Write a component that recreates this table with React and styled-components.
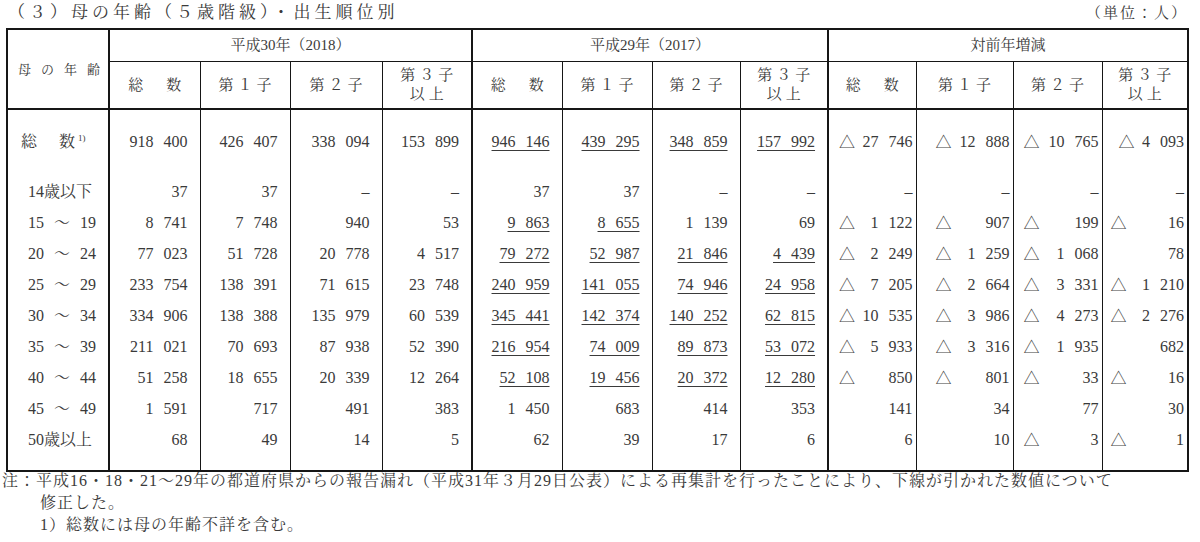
import React from "react"
import styled, { createGlobalStyle } from "styled-components"

const INK = "#3a3a3a"
const LINE = "#161616"

const GlobalStyle = createGlobalStyle`
  html, body {
    margin: 0;
    padding: 0;
    background: #fff;
  }
  body {
    font-family: "Liberation Serif", "Noto Serif CJK JP", "Noto Sans CJK JP", serif;
    color: ${INK};
  }
`

const Page = styled.div`
  width: 1200px;
  height: 542px;
  overflow: hidden;
`

const TitleBar = styled.header`
  display: flex;
  justify-content: space-between;
  align-items: flex-start;
  height: 28px;
  padding: 2px 12px 0 8px;
  box-sizing: border-box;
`

const Title = styled.h1`
  margin: 0;
  font-size: 17px;
  line-height: 22px;
  font-weight: normal;
  letter-spacing: 4px;
  white-space: nowrap;
`

const Unit = styled.span`
  font-size: 15px;
  line-height: 22px;
  letter-spacing: 2px;
`

const Table = styled.table`
  margin-left: 6px;
  width: 1182px;
  table-layout: fixed;
  border-collapse: collapse;
  border: 2px solid ${LINE};
`

const HeadCell = styled.th`
  height: ${p => p.$h}px;
  padding: 0 0 0 ${p => p.$spread ?? 4}px;
  font-size: ${p => p.$size ?? 15}px;
  font-weight: normal;
  line-height: 19px;
  letter-spacing: ${p => p.$spread ?? 4}px;
  text-align: center;
  vertical-align: middle;
  white-space: nowrap;
  border: 1px solid ${LINE};
  border-left-width: ${p => (p.$thick ? 2 : 1)}px;
  border-bottom-width: ${p => (p.$bottom ? 2 : 1)}px;
`

const Cell = styled.td`
  padding: ${p => p.$pt}px ${p => p.$pr ?? 12}px ${p => p.$pb}px ${p => p.$pl ?? 0}px;
  font-size: 16px;
  line-height: 31px;
  word-spacing: 6px;
  text-align: ${p => (p.$left ? "left" : "right")};
  vertical-align: middle;
  white-space: nowrap;
  border-top: none;
  border-bottom: none;
  border-left: ${p => (p.$thick ? 2 : 1)}px solid ${LINE};
`

const Fixed = styled.span`
  text-decoration: underline;
  text-decoration-thickness: 1px;
  text-underline-offset: 3px;
`

const DiffBox = styled.span`
  display: flex;
  justify-content: space-between;
  align-items: center;
`

const Tri = styled.span`
  font-family: "Noto Sans CJK JP", sans-serif;
  font-size: 16px;
  color: #444;
`

const Sup = styled.sup`
  font-size: 9px;
  line-height: 0;
  vertical-align: 6px;
  letter-spacing: 0;
  word-spacing: 0;
`

const TotalLabel = styled.span`
  letter-spacing: 3px;
`

const Notes = styled.section`
  margin-top: -2px;
  padding: 0 0 0 2px;
  font-size: 16px;
  line-height: 22px;
  letter-spacing: 1px;
  white-space: nowrap;
`

const NoteLine = styled.div`
  padding-left: ${p => (p.$indent ? 38 : 0)}px;
`

const widths = [102, 91, 90, 92, 90, 90, 90, 88, 88, 88, 97, 89, 86]
const diffPad = [10, 19, 10, 8]

const rows = [
  {
    label: <TotalLabel>総　数<Sup>1)</Sup></TotalLabel>,
    total: true,
    y18: ["918 400", "426 407", "338 094", "153 899"],
    y17: ["_946 146", "_439 295", "_348 859", "_157 992"],
    diff: ["△27 746", "△12 888", "△10 765", "△4 093"],
  },
  {
    label: "14歳以下",
    y18: ["37", "37", "–", "–"],
    y17: ["37", "37", "–", "–"],
    diff: ["–", "–", "–", "–"],
  },
  {
    label: "15 ～ 19",
    y18: ["8 741", "7 748", "940", "53"],
    y17: ["_9 863", "_8 655", "1 139", "69"],
    diff: ["△1 122", "△907", "△199", "△16"],
  },
  {
    label: "20 ～ 24",
    y18: ["77 023", "51 728", "20 778", "4 517"],
    y17: ["_79 272", "_52 987", "_21 846", "_4 439"],
    diff: ["△2 249", "△1 259", "△1 068", "78"],
  },
  {
    label: "25 ～ 29",
    y18: ["233 754", "138 391", "71 615", "23 748"],
    y17: ["_240 959", "_141 055", "_74 946", "_24 958"],
    diff: ["△7 205", "△2 664", "△3 331", "△1 210"],
  },
  {
    label: "30 ～ 34",
    y18: ["334 906", "138 388", "135 979", "60 539"],
    y17: ["_345 441", "_142 374", "_140 252", "_62 815"],
    diff: ["△10 535", "△3 986", "△4 273", "△2 276"],
  },
  {
    label: "35 ～ 39",
    y18: ["211 021", "70 693", "87 938", "52 390"],
    y17: ["_216 954", "_74 009", "_89 873", "_53 072"],
    diff: ["△5 933", "△3 316", "△1 935", "682"],
  },
  {
    label: "40 ～ 44",
    y18: ["51 258", "18 655", "20 339", "12 264"],
    y17: ["_52 108", "_19 456", "_20 372", "_12 280"],
    diff: ["△850", "△801", "△33", "△16"],
  },
  {
    label: "45 ～ 49",
    y18: ["1 591", "717", "491", "383"],
    y17: ["1 450", "683", "414", "353"],
    diff: ["141", "34", "77", "30"],
  },
  {
    label: "50歳以上",
    last: true,
    y18: ["68", "49", "14", "5"],
    y17: ["62", "39", "17", "6"],
    diff: ["6", "10", "△3", "△1"],
  },
]

const subHeads = ["総　数", "第１子", "第２子", <>第３子<br />以上</>]

const rowPad = row => ({
  $pt: row.total ? 16 : 0,
  $pb: row.total ? 19 : row.last ? 15 : 0,
})

const Value = ({ v }) =>
  v.startsWith("_") ? <Fixed>{v.slice(1)}</Fixed> : v

const Diff = ({ v }) =>
  v.startsWith("△") ? (
    <DiffBox>
      <Tri>△</Tri>
      <span>{v.slice(1)}</span>
    </DiffBox>
  ) : (
    v
  )

const App = () => (
  <Page>
    <GlobalStyle />
    <TitleBar>
      <Title>（３）母の年齢（５歳階級）・出生順位別</Title>
      <Unit>（単位：人）</Unit>
    </TitleBar>

    <Table>
      <colgroup>
        {widths.map((w, i) => (
          <col key={i} style={{ width: w }} />
        ))}
      </colgroup>
      <thead>
        <tr>
          <HeadCell rowSpan={2} $h={31} $size={13} $spread={10} $bottom>
            母の年齢
          </HeadCell>
          <HeadCell colSpan={4} $h={31} $spread={0} $thick>
            平成30年（2018）
          </HeadCell>
          <HeadCell colSpan={4} $h={31} $spread={0} $thick>
            平成29年（2017）
          </HeadCell>
          <HeadCell colSpan={4} $h={31} $spread={0} $thick>
            対前年増減
          </HeadCell>
        </tr>
        <tr>
          {[0, 1, 2].map(g =>
            subHeads.map((h, i) => (
              <HeadCell key={`${g}-${i}`} $h={46} $thick={i === 0} $bottom>
                {h}
              </HeadCell>
            ))
          )}
        </tr>
      </thead>
      <tbody>
        {rows.map((row, r) => {
          const pad = rowPad(row)
          return (
            <tr key={r}>
              <Cell {...pad} $left $pl={row.total ? 13 : 20} $pr={0}>
                {row.label}
              </Cell>
              {row.y18.map((v, i) => (
                <Cell key={`a${i}`} {...pad} $thick={i === 0}>
                  {v}
                </Cell>
              ))}
              {row.y17.map((v, i) => (
                <Cell key={`b${i}`} {...pad} $thick={i === 0}>
                  <Value v={v} />
                </Cell>
              ))}
              {row.diff.map((v, i) => (
                <Cell
                  key={`c${i}`}
                  {...pad}
                  $thick={i === 0}
                  $pr={3}
                  $pl={row.total && i === 3 ? 16 : diffPad[i]}
                >
                  <Diff v={v} />
                </Cell>
              ))}
            </tr>
          )
        })}
      </tbody>
    </Table>

    <Notes>
      <NoteLine>
        注：平成16・18・21～29年の都道府県からの報告漏れ（平成31年３月29日公表）による再集計を行ったことにより、下線が引かれた数値について
      </NoteLine>
      <NoteLine $indent>修正した。</NoteLine>
      <NoteLine $indent>1）総数には母の年齢不詳を含む。</NoteLine>
    </Notes>
  </Page>
)

export default App
